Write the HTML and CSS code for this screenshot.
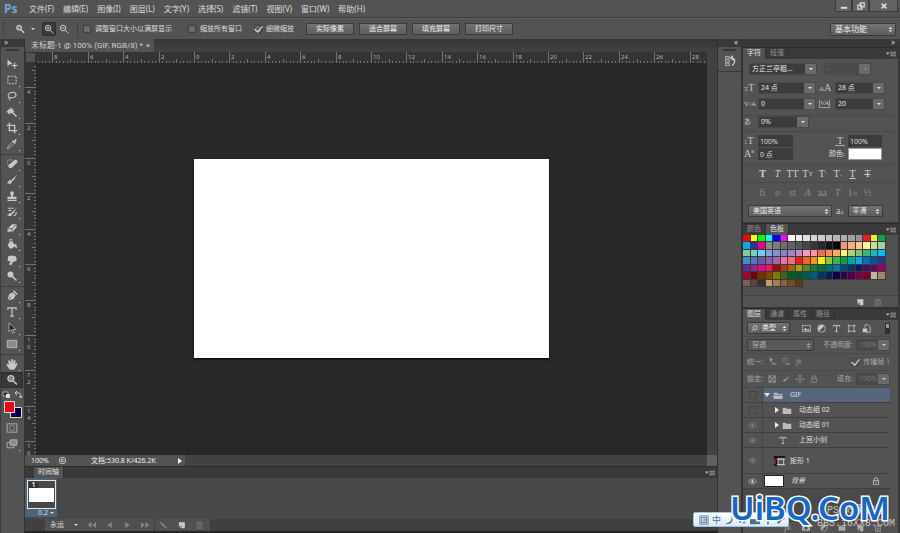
FILE: index.html
```html
<!DOCTYPE html>
<html lang="zh-CN">
<head>
<meta charset="UTF-8">
<title>未标题-1</title>
<link rel="stylesheet" href="styles.css">
</head>
<body>
<!-- icon sprite -->
<svg class="sprite" aria-hidden="true">
	<symbol id="move" viewBox="0 0 16 16"><path d="M2 2v9l2.500-2.500L9 8z" fill="currentColor"/><path d="M11.500 6v8M7.500 10h8" stroke="currentColor" stroke-width="1.500"/></symbol>
	<symbol id="marquee" viewBox="0 0 16 16"><rect x="2.500" y="3" width="11" height="10" fill="none" stroke="currentColor" stroke-width="1.300" stroke-dasharray="2.500 1.500"/></symbol>
	<symbol id="lasso" viewBox="0 0 16 16"><path d="M4 10C1 7 4 3 9 3s6 6 1 7c-3 1-6-1-6 1s2 1 1 3" fill="none" stroke="currentColor" stroke-width="1.400"/></symbol>
	<symbol id="wand" viewBox="0 0 16 16"><path d="M6 1l1 3 3-1-1 3 3 1-3 1 0 2-3-1-2 3-1-3-3-1 3-2-1-2 3 1z" fill="currentColor"/><path d="M8 8l6 6" stroke="currentColor" stroke-width="1.800"/></symbol>
	<symbol id="crop" viewBox="0 0 16 16"><path d="M4.500 1v10.500H15M1 4.500h10.500V15" fill="none" stroke="currentColor" stroke-width="1.800"/></symbol>
	<symbol id="dropper" viewBox="0 0 16 16"><path d="M2 14l1-3 6-6 2 2-6 6z" fill="none" stroke="currentColor"/><path d="M8 4l4 4 1-1-1-1 2-2c1-1-1-3-2-2l-2 2-1-1z" fill="currentColor"/></symbol>
	<symbol id="heal" viewBox="0 0 16 16"><path d="M4 9l7-6c3-2 5 1 4 3l-7 7c-3 2-6-1-4-4z" fill="currentColor"/><path d="M8 3C3 1 1 4 2 7s2 4 3 6" fill="none" stroke="currentColor" stroke-dasharray="2 1"/></symbol>
	<symbol id="brush" viewBox="0 0 16 16"><path d="M15 1L7 8l2 2z" fill="currentColor"/><path d="M6 8c-3 0-2 3-5 4 3 2 7 1 7-2z" fill="currentColor"/></symbol>
	<symbol id="stamp" viewBox="0 0 16 16"><path d="M5.500 4a2.500 2.500 0 1 1 5 0L9 9h5v3H2V9h5zM2 13h12v1.500H2z" fill="currentColor"/></symbol>
	<symbol id="history" viewBox="0 0 16 16"><path d="M14 3L7 9l2 2zM6 9c-2 0-2 3-5 3 3 2 7 2 7-1z" fill="currentColor"/><path d="M3 3h7M3 6h4M10 13c4 0 4-4 3-5" fill="none" stroke="currentColor" stroke-width="1.500"/></symbol>
	<symbol id="eraser" viewBox="0 0 16 16"><path d="M8 3h6v4l-5 6H2V9z" fill="currentColor"/><path d="M2 9h6l6-6M8 9v4" fill="none" stroke="#444"/></symbol>
	<symbol id="bucket" viewBox="0 0 16 16"><path d="M2 9l5-5 6 6-5 4H5z" fill="currentColor"/><path d="M5 8V2h3v5" fill="none" stroke="currentColor"/><path d="M12 8c3 1 3 3 2 6-2-1-2-3-2-6z" fill="currentColor"/></symbol>
	<symbol id="smudge" viewBox="0 0 16 16"><path d="M3 3c4-2 10-1 11 2v4l-5 2-2 4-3-1 2-4-4-1z" fill="currentColor"/></symbol>
	<symbol id="dodge" viewBox="0 0 16 16"><circle cx="6" cy="6" r="4" fill="currentColor"/><path d="M8.500 8.500L14 14" stroke="currentColor" stroke-width="2"/></symbol>
	<symbol id="pen" viewBox="0 0 16 16"><path d="M2 14l2-8 5-3 4 4-3 5z" fill="currentColor"/><path d="M10 1l5 5" stroke="currentColor" stroke-width="2"/><path d="M2 14l5-5" stroke="#444"/></symbol>
	<symbol id="type" viewBox="0 0 16 16"><path d="M2.500 5V2.500h11V5M8 2.500v11M5.500 13.500h5" fill="none" stroke="currentColor" stroke-width="1.600"/></symbol>
	<symbol id="select" viewBox="0 0 16 16"><path d="M4 1v12l3-3 2 5 2-1-2-4h4z" fill="#222" stroke="currentColor"/></symbol>
	<symbol id="rect" viewBox="0 0 16 16"><rect x="1.500" y="3" width="13" height="10" fill="#8a8a8a" stroke="currentColor"/></symbol>
	<symbol id="hand" viewBox="0 0 16 16"><path d="M5 15L1 9l1-1 3 2-2-6 1.500-.5L7 8V2h1.500l.5 6 2-5 1.300.5L11 9l3-2 1 1-4 7z" fill="currentColor" stroke="currentColor"/></symbol>
	<symbol id="zoom" viewBox="0 0 16 16"><circle cx="6.500" cy="6" r="4" fill="#888" stroke="currentColor" stroke-width="1.500"/><path d="M9.500 9l5 5" stroke="currentColor" stroke-width="2.200"/></symbol>
	<symbol id="zoomin" viewBox="0 0 16 16"><circle cx="6.500" cy="6.500" r="4.500" fill="none" stroke="currentColor" stroke-width="1.300"/><path d="M10 10l5 5M4 6.500h5M6.500 4v5" stroke="currentColor" stroke-width="1.400"/></symbol>
	<symbol id="zoomout" viewBox="0 0 16 16"><circle cx="6.500" cy="6.500" r="4.500" fill="none" stroke="currentColor" stroke-width="1.300"/><path d="M10 10l5 5M4 6.500h5" stroke="currentColor" stroke-width="1.400"/></symbol>
	<symbol id="mask" viewBox="0 0 16 16"><rect x="1.500" y="2.500" width="13" height="11" fill="none" stroke="currentColor"/><circle cx="8" cy="8" r="3.500" fill="none" stroke="currentColor" stroke-dasharray="2 1"/></symbol>
	<symbol id="screen" viewBox="0 0 16 16"><path d="M5.500 2.500h9v7h-9z" fill="#888" stroke="currentColor"/><path d="M5.500 6h-4v7h9V9.500" fill="none" stroke="currentColor"/></symbol>
	<symbol id="updown" viewBox="0 0 8 10"><path d="M1 4l3-3 3 3zM1 6l3 3 3-3z" fill="currentColor"/></symbol>
	<symbol id="menu" viewBox="0 0 14 8"><path d="M0 2h5L2.500 5z" fill="currentColor"/><path d="M6 1.500h8M6 4h8M6 6.500h8" stroke="currentColor"/></symbol>
	<symbol id="new" viewBox="0 0 12 12"><path d="M2 2h9v9H6V7H2z" fill="currentColor"/><path d="M2 8l3 3V8z" fill="currentColor"/></symbol>
	<symbol id="trash" viewBox="0 0 12 12"><path d="M1 3.500h10M4 3V1.500h4V3M2.500 4v7h7V4M5 5.500v4M7 5.500v4" fill="none" stroke="currentColor"/></symbol>
	<symbol id="image" viewBox="0 0 14 12"><rect x="1" y="1" width="12" height="10" fill="none" stroke="currentColor"/><path d="M2 9l3-4 3 3 2-2 2 3z" fill="currentColor"/></symbol>
	<symbol id="maskadd" viewBox="0 0 14 12"><path fill-rule="evenodd" d="M0 1h14v10H0zM7 3a3 3 0 1 0 .1 0z" fill="currentColor"/></symbol>
	<symbol id="adjust" viewBox="0 0 12 12"><circle cx="6" cy="6" r="5" fill="none" stroke="currentColor"/><path d="M2.500 9.500a5 5 0 0 1 7-7z" fill="currentColor"/></symbol>
	<symbol id="shape" viewBox="0 0 12 12"><path d="M2.500 2.500h7v7h-7z" fill="none" stroke="currentColor"/><path d="M1 1h2v2H1zM9 1h2v2H9zM1 9h2v2H1zM9 9h2v2H9z" fill="currentColor"/></symbol>
	<symbol id="smart" viewBox="0 0 12 12"><path d="M4 5V1h4l3 3v7H6" fill="none" stroke="currentColor"/><path d="M1 6h6v5H1z" fill="currentColor"/></symbol>
	<symbol id="lock" viewBox="0 0 12 12"><path d="M3.500 6V3.500a2.500 2.500 0 0 1 5 0V6M2 5.500h8v6H2zM6 7.500v2" fill="none" stroke="currentColor"/></symbol>
	<symbol id="folder" viewBox="0 0 14 12"><path d="M1 2h4l1 1.500h7V11H1z" fill="currentColor"/></symbol>
	<symbol id="openfolder" viewBox="0 0 14 12"><path d="M2 2h4l1 1.500h6V5H1V3z" fill="currentColor"/><path d="M0 6h14l-1 5H1z" fill="currentColor"/></symbol>
	<symbol id="eye" viewBox="0 0 14 10"><path d="M1 5c3-5 9-5 12 0-3 5-9 5-12 0z" fill="none" stroke="currentColor"/><circle cx="7" cy="5" r="2" fill="currentColor"/></symbol>
	<symbol id="checker" viewBox="0 0 12 12"><path d="M1 1h10v10H1z" fill="none" stroke="currentColor"/><path d="M2 2h3v3H2zM8 2h3v3H8zM5 5h3v3H5zM2 8h3v3H2zM8 8h3v3H8z" fill="currentColor"/></symbol>
	<symbol id="cross" viewBox="0 0 12 12"><path d="M6 0v12M0 6h12M4 2l2-2 2 2M4 10l2 2 2-2M2 4L0 6l2 2M10 4l2 2-2 2" fill="none" stroke="currentColor"/></symbol>
	<symbol id="unipos" viewBox="0 0 14 14"><path d="M3 1v8l2-2 3 3 1-1-3-3 3-1z" fill="currentColor"/><path d="M7 11h3v2H7zM11 11h3v2h-3z" fill="none" stroke="currentColor"/></symbol>
	<symbol id="univis" viewBox="0 0 14 14"><path d="M1 5c2-5 7-5 9 0-2 4-7 4-9 0zM5 4h2" fill="none" stroke="currentColor"/><path d="M7 11h3v2H7zM11 11h3v2h-3z" fill="none" stroke="currentColor"/></symbol>
	<symbol id="hist" viewBox="0 0 16 16"><path d="M2 2h5v3H2zM2 6.500h5v3H2zM2 11h5v3H2z" fill="none" stroke="currentColor"/><path d="M11 14c5-4 4-9-1-10M12 1L9 4l4 3" fill="none" stroke="currentColor" stroke-width="1.800"/></symbol>
</svg>

<header class="menubar">
	<span class="logo">Ps</span>
	<nav class="menus">
		<a href="#">文件(F)</a><a href="#">编辑(E)</a><a href="#">图像(I)</a><a href="#">图层(L)</a><a href="#">文字(Y)</a><a href="#">选择(S)</a><a href="#">滤镜(T)</a><a href="#">视图(V)</a><a href="#">窗口(W)</a><a href="#">帮助(H)</a>
	</nav>
	<div class="winbtns">
		<button aria-label="最小化"><svg viewBox="0 0 10 10"><path d="M1 6h8v2.500H1z" fill="currentColor"/></svg></button>
		<button aria-label="还原"><svg viewBox="0 0 10 10"><path d="M4 1h5v5H4zM1 4h5v5H1z" fill="#555" stroke="currentColor" stroke-width="1.500"/></svg></button>
		<button class="close" aria-label="关闭"><svg viewBox="0 0 10 10"><path d="M2 2l6 6M8 2L2 8" stroke="currentColor" stroke-width="2"/></svg></button>
	</div>
</header>

<div class="options">
	<span class="grip"></span>
	<button class="tool-now" aria-label="缩放工具"><svg class="ic"><use href="#zoom"/></svg><i class="down"></i></button>
	<button class="zbtn on" aria-label="放大"><svg class="ic"><use href="#zoomin"/></svg></button>
	<button class="zbtn" aria-label="缩小"><svg class="ic"><use href="#zoomout"/></svg></button>
	<span class="vsep"></span>
	<label class="opt wide"><input type="checkbox">调整窗口大小以满屏显示</label>
	<label class="opt"><input type="checkbox">缩放所有窗口</label>
	<label class="opt"><input type="checkbox" checked>细微缩放</label>
	<div class="btns">
		<button class="btn">实际像素</button>
		<button class="btn">适合屏幕</button>
		<button class="btn">填充屏幕</button>
		<button class="btn">打印尺寸</button>
	</div>
	<div class="pick work"><select aria-label="工作区"><option>基本功能</option></select><svg><use href="#updown"/></svg></div>
</div>

<div class="workspace">
	<aside class="tools">
		<div class="strip left">»</div>
		<div class="toolgrip"></div>
		<div class="group">
			<button aria-label="移动"><svg><use href="#move"/></svg></button>
			<button class="more" aria-label="选框"><svg><use href="#marquee"/></svg></button>
			<button class="more" aria-label="套索"><svg><use href="#lasso"/></svg></button>
			<button class="more" aria-label="魔棒"><svg><use href="#wand"/></svg></button>
			<button class="more" aria-label="裁剪"><svg><use href="#crop"/></svg></button>
			<button class="more" aria-label="吸管"><svg><use href="#dropper"/></svg></button>
		</div>
		<div class="group">
			<button class="more" aria-label="修复画笔"><svg><use href="#heal"/></svg></button>
			<button class="more" aria-label="画笔"><svg><use href="#brush"/></svg></button>
			<button class="more" aria-label="图章"><svg><use href="#stamp"/></svg></button>
			<button class="more" aria-label="历史画笔"><svg><use href="#history"/></svg></button>
			<button class="more" aria-label="橡皮擦"><svg><use href="#eraser"/></svg></button>
			<button class="more" aria-label="油漆桶"><svg><use href="#bucket"/></svg></button>
			<button class="more" aria-label="涂抹"><svg><use href="#smudge"/></svg></button>
			<button class="more" aria-label="减淡"><svg><use href="#dodge"/></svg></button>
		</div>
		<div class="group">
			<button class="more" aria-label="钢笔"><svg><use href="#pen"/></svg></button>
			<button class="more" aria-label="文字"><svg><use href="#type"/></svg></button>
			<button class="more" aria-label="路径选择"><svg><use href="#select"/></svg></button>
			<button class="more" aria-label="矩形"><svg><use href="#rect"/></svg></button>
		</div>
		<div class="group last">
			<button class="more" aria-label="抓手"><svg><use href="#hand"/></svg></button>
			<button class="on" aria-label="缩放"><svg><use href="#zoom"/></svg></button>
		</div>
		<svg class="colors" viewBox="0 0 24 32">
			<path d="M2 4h5v4H2z" fill="#222" stroke="#aaa"/><path d="M5 6h4v4H5z" fill="#ddd"/>
			<path d="M15 5c4-1 5 1 5 4M16 3l-2 2 2 2M18 8l2 2 1-2" fill="none" stroke="#ccc"/>
			<path d="M9.500 19.500h11v10h-11z" fill="#000048" stroke="#ddd"/>
			<path d="M3.500 13.500h10v11h-10z" fill="#f00012" stroke="#ddd"/>
		</svg>
		<div class="group modes">
			<button aria-label="快速蒙版"><svg><use href="#mask"/></svg></button>
			<button class="more" aria-label="屏幕模式"><svg><use href="#screen"/></svg></button>
		</div>
	</aside>

	<main class="doc">
		<div class="doctabs"><div class="doctab"><span>未标题-1 @ 100% (GIF, RGB/8) *</span><button aria-label="关闭文档">×</button></div></div>
		<div class="view">
			<div class="corner"></div>
			<svg class="ruler-x" id="rulerX"></svg>
			<div class="scroll"></div>
			<svg class="ruler-y" id="rulerY"></svg>
			<div class="stage"><div class="paper"></div></div>
			<div class="scroll"></div>
		</div>
		<div class="status">
			<span class="pct">100%</span>
			<svg viewBox="0 0 10 10"><circle cx="5" cy="5" r="4" fill="#bbb"/><path d="M3 3h4v4H3zM5 5h2" fill="none" stroke="#555"/></svg>
			<span class="size">文档:530.8 K/426.2K</span>
			<button aria-label="更多"><i class="right"></i></button>
			<span class="bar"></span>
			<span class="end"></span>
		</div>
		<section class="timeline">
			<div class="tabs"><span class="tab on">时间轴</span><svg class="pmenu"><use href="#menu"/></svg></div>
			<div class="frames">
				<div class="frame">
					<div class="thumb"><b>1</b><span></span></div>
					<span class="delay">0.2<i class="down"></i></span>
				</div>
			</div>
			<div class="playbar">
				<div class="play">
					<div class="loop"><select aria-label="循环"><option>永远</option></select><i class="down"></i></div>
					<button aria-label="第一帧"><svg viewBox="0 0 12 10"><path d="M6 1v8L1 5zM12 1v8L7 5z" fill="currentColor"/></svg></button>
					<button aria-label="上一帧"><svg viewBox="0 0 12 10"><path d="M9 1v8L3 5z" fill="currentColor"/></svg></button>
					<button aria-label="播放"><svg viewBox="0 0 12 10"><path d="M3 1v8l6-4z" fill="currentColor"/></svg></button>
					<button aria-label="下一帧"><svg viewBox="0 0 12 10"><path d="M0 1v8l5-4zM6 1v8l5-4z" fill="currentColor"/></svg></button>
					<button class="cut" aria-label="过渡"><svg viewBox="0 0 12 10"><path d="M2 1l9 8-3-1-4-3z" fill="currentColor" stroke="currentColor"/></svg></button>
					<button class="lit" aria-label="复制帧"><svg><use href="#new"/></svg></button>
					<button aria-label="删除帧"><svg><use href="#trash"/></svg></button>
				</div>
			</div>
		</section>
	</main>

	<aside class="dock">
		<div class="strip">«</div>
		<button aria-label="历史记录"><svg><use href="#hist"/></svg></button>
	</aside>

	<aside class="panels">
		<div class="strip">»</div>
		<section class="panel">
			<div class="tabs"><span class="tab on">字符</span><span class="tab">段落</span><svg class="pmenu"><use href="#menu"/></svg></div>
			<div class="char">
				<div class="row fonts">
					<div class="combo family"><input aria-label="字体" value="方正兰亭粗..."><button aria-label="选择字体"><i class="down"></i></button></div>
					<div class="combo style off"><input aria-label="字形" value="-" disabled><button aria-label="选择字形" disabled><i class="down"></i></button></div>
				</div>
				<div class="pairs">
					<label for="fs"><small>T</small>T</label><div class="combo"><input id="fs" value="24 点"><button aria-label="字号"><i class="down"></i></button></div>
					<label for="lh"><small>A</small>A</label><div class="combo"><input id="lh" value="28 点"><button aria-label="行距"><i class="down"></i></button></div>
					<label class="kern" for="kn">V/A</label><div class="combo"><input id="kn" value="0"><button aria-label="字偶距"><i class="down"></i></button></div>
					<label class="boxed" for="tr">VA</label><div class="combo"><input id="tr" value="20"><button aria-label="字距"><i class="down"></i></button></div>
				</div>
				<div class="row tsume"><label for="ts">あ</label><div class="combo"><input id="ts" value="0%"><button aria-label="比例间距"><i class="down"></i></button></div></div>
				<div class="scales">
					<label for="vs"><small>↕</small>T</label><input id="vs" value="100%"><label class="r wide" for="hs">T</label><input id="hs" value="100%">
					<label for="bl">Aª</label><input id="bl" value="0 点"><label class="r word" for="col">颜色:</label><input id="col" type="color" value="#ffffff">
				</div>
				<div class="faces">
					<button><b>T</b></button><button><i>T</i></button><button>TT</button><button>T<small>T</small></button><button>T<sup>'</sup></button><button>T<sub>,</sub></button><button><u>T</u></button><button><s>T</s></button>
				</div>
				<div class="faces dim">
					<button>fi</button><button><i>o</i></button><button>st</button><button><i>A</i></button><button>aa</button><button><i>T</i></button><button>1<sup>st</sup></button><button>½</button>
				</div>
				<div class="row lang">
					<div class="pick language"><select aria-label="语言"><option>美国英语</option></select><svg><use href="#updown"/></svg></div>
					<label for="aa">a<small>a</small></label>
					<div class="pick alias"><select id="aa"><option>平滑</option></select><svg><use href="#updown"/></svg></div>
				</div>
			</div>
		</section>

		<section class="panel">
			<div class="tabs"><span class="tab">颜色</span><span class="tab on">色板</span><svg class="pmenu"><use href="#menu"/></svg></div>
			<div class="swatchbox"><div class="swatches" id="swatches"></div></div>
			<div class="foot"><svg><use href="#new"/></svg><svg class="dim"><use href="#trash"/></svg></div>
		</section>

		<section class="panel layers">
			<div class="tabs"><span class="tab on">图层</span><span class="tab">通道</span><span class="tab">属性</span><span class="tab">路径</span><svg class="pmenu"><use href="#menu"/></svg></div>
			<div class="lrow filter">
				<div class="pick kind"><svg class="glass" viewBox="0 0 10 10"><circle cx="6" cy="4" r="3" fill="none" stroke="currentColor"/><path d="M4 6L1 9" stroke="currentColor"/></svg><select aria-label="筛选"><option>类型</option></select><svg><use href="#updown"/></svg></div>
				<span class="kinds"><svg><use href="#image"/></svg><svg><use href="#adjust"/></svg><svg><use href="#type"/></svg><svg><use href="#shape"/></svg><svg><use href="#smart"/></svg></span>
				<span class="switch"></span>
			</div>
			<div class="lrow dimrow">
				<div class="pick blend"><select aria-label="混合模式"><option>穿透</option></select><svg><use href="#updown"/></svg></div>
				<label class="push" for="op">不透明度:</label><div class="combo"><input id="op" value="100%" disabled><button aria-label="不透明度"><i class="down"></i></button></div>
			</div>
			<div class="lrow dimrow">
				<span>统一:</span>
				<span class="locks"><svg><use href="#unipos"/></svg><svg><use href="#univis"/></svg><em>fx</em></span>
				<label class="opt push"><input type="checkbox" checked>传播帧 1</label>
			</div>
			<div class="lrow dimrow">
				<span>锁定:</span>
				<span class="locks"><svg><use href="#checker"/></svg><svg><use href="#brush"/></svg><svg><use href="#cross"/></svg><svg><use href="#lock"/></svg></span>
				<label class="push" for="fl">填充:</label><div class="combo"><input id="fl" value="100%" disabled><button aria-label="填充"><i class="down"></i></button></div>
			</div>
			<ul class="list">
				<li class="sel"><span class="vis"><i class="box"></i></span><i class="down big"></i><svg class="fold"><use href="#openfolder"/></svg><span class="name">GIF</span></li>
				<li class="sub"><span class="vis"><i class="box"></i></span><i class="right"></i><svg class="fold"><use href="#folder"/></svg><span class="name">动态组 02</span></li>
				<li class="sub"><span class="vis"><svg><use href="#eye"/></svg></span><i class="right"></i><svg class="fold"><use href="#folder"/></svg><span class="name">动态组 01</span></li>
				<li class="sub text"><span class="vis"><svg><use href="#eye"/></svg></span><svg class="fold"><use href="#type"/></svg><span class="name">上宫小剑</span></li>
				<li class="tall"><span class="vis"><svg><use href="#eye"/></svg></span><svg class="vec" viewBox="0 0 12 12"><path d="M0 1h12v2H4v9H0z" fill="#1c1010"/><path d="M0 4h2v6H0z" fill="#72302a"/><path d="M4.500 4.500h6v6h-6zM3 4.500h9M3 10.500h9" fill="none" stroke="#ccc"/></svg><span class="name">矩形 1</span></li>
				<li class="back"><span class="vis lit"><svg><use href="#eye"/></svg></span><span class="white"></span><span class="name"><i>背景</i></span><svg class="lk"><use href="#lock"/></svg></li>
			</ul>
			<div class="foot lfoot"><em>fx.</em><svg><use href="#maskadd"/></svg><svg><use href="#adjust"/></svg><svg><use href="#folder"/></svg><svg><use href="#new"/></svg><svg><use href="#trash"/></svg></div>
		</section>
	</aside>
</div>

<div class="ime">
	<svg viewBox="0 0 12 12"><path d="M1 1h10v10H1zM3 3h6v6H3zM5 5h4M5 7h3" fill="none" stroke="#456b96"/></svg>
	<span>中</span>
	<svg viewBox="0 0 12 12"><path d="M9 1c1 6-2 9-8 9 6 3 12-3 8-9z" fill="#456b96"/></svg>
	<svg viewBox="0 0 12 12"><path d="M3 9l2-2M8 8l1 2" stroke="#456b96" stroke-width="2"/></svg>
	<svg viewBox="0 0 12 12"><path d="M0 5h12v6H0z" fill="#456b96"/></svg>
	<svg viewBox="0 0 12 12"><path d="M6 3v8M3 6h6" stroke="#456b96" stroke-width="2"/></svg>
	<svg viewBox="0 0 12 12"><path d="M2 10l6-6M7 2l3 3" stroke="#456b96" stroke-width="2"/></svg>
</div>
<div class="credit"><span>PS 效果教程</span><span>BBS.16XX8.COM</span></div>
<div class="brand">UiBQ.CoM</div>

<script src="script.js"></script>
</body>
</html>
```

FILE: styles.css
```css
* {
	box-sizing: border-box;
}
body {
	margin: 0;
	height: 100vh;
	overflow: hidden;
	display: flex;
	flex-direction: column;
	background: #535353;
	color: #dcdcdc;
	font: 7px/10px "Noto Sans", "Noto Sans CJK SC", sans-serif;
}
button, input, select {
	font: inherit;
	color: inherit;
	margin: 0;
	padding: 0;
	border: 0;
	border-radius: 0;
	background: none;
	appearance: none;
	min-width: 0;
	outline: none;
}
button {
	display: flex;
	align-items: center;
	justify-content: center;
}
svg {
	display: block;
	flex: none;
}
.sprite {
	position: absolute;
	width: 0;
	height: 0;
}
.down {
	flex: none;
	border: 2px solid transparent;
	border-top-color: currentColor;
	border-bottom: 0;
}
.down.big {
	border-width: 4px 3px 0;
}
.right {
	flex: none;
	border-style: solid;
	border-width: 3px 0 3px 4px;
	border-color: transparent transparent transparent #eee;
}

/* menu bar */
.menubar {
	flex: none;
	height: 18px;
	display: flex;
	align-items: center;
	border-bottom: 1px solid #3c3c3c;
	font-size: 8px;
}
.logo {
	width: 29px;
	padding-left: 4px;
	color: #6ea6dc;
	font: bold 12px/16px "Open Sans", sans-serif;
}
.menus {
	display: flex;
	flex: 1;
	gap: 9px;
}
.menus a {
	color: inherit;
	text-decoration: none;
	white-space: nowrap;
}
.winbtns {
	display: flex;
	align-self: flex-start;
	margin-right: 2px;
}
.winbtns button {
	width: 17px;
	height: 12px;
	background: #626262;
	border: 1px solid #3d3d3d;
	border-top: 0;
}
.winbtns .close {
	width: 29px;
}
.winbtns svg {
	width: 8px;
	height: 8px;
}

/* options bar */
.options {
	flex: none;
	height: 21px;
	display: flex;
	align-items: center;
	border-top: 1px solid #606060;
	padding-right: 4px;
}
.grip {
	width: 3px;
	height: 14px;
	margin: 0 8px 0 3px;
	border-left: 1px dotted #333;
}
.ic {
	width: 10px;
	height: 10px;
}
.tool-now {
	gap: 6px;
	width: 24px;
	height: 14px;
	margin-right: 4px;
	padding-right: 3px;
}
.zbtn {
	width: 14px;
	height: 14px;
	margin-right: 1px;
}
.zbtn.on {
	background: #3a3a3a;
	border: 1px solid #303030;
	border-radius: 2px;
}
.vsep {
	width: 1px;
	height: 15px;
	margin: 0 5px;
	background: #3f3f3f;
}
.opt {
	display: flex;
	align-items: center;
	gap: 4px;
	margin-right: 12px;
	white-space: nowrap;
}
.opt.wide {
	margin-right: 16px;
}
.opt input {
	position: relative;
	width: 8px;
	height: 8px;
	border: 1px solid #3e3e3e;
	border-radius: 1px;
	background: #6a6a6a;
}
.opt input:checked::after {
	content: "";
	position: absolute;
	left: 1px;
	top: -2px;
	width: 4px;
	height: 7px;
	border: solid #e6e6e6;
	border-width: 0 1px 1px 0;
	transform: rotate(40deg);
}
.btns {
	display: flex;
	flex: 1;
	gap: 5px;
}
.btn {
	width: 48px;
	height: 12px;
	border: 1px solid #3b3b3b;
	background: linear-gradient(#727272, #5e5e5e);
	color: #eee;
}
.pick {
	position: relative;
	display: flex;
	align-items: center;
	height: 12px;
	border: 1px solid #3a3a3a;
	border-radius: 1px;
	background: linear-gradient(#727272, #5e5e5e);
	color: #eee;
}
.pick select {
	flex: 1;
	height: 10px;
	padding-left: 4px;
}
.pick > svg:last-child {
	position: absolute;
	right: 2px;
	width: 5px;
	height: 7px;
	pointer-events: none;
}
.work {
	width: 66px;
	height: 13px;
	font-size: 8px;
}

/* workspace */
.workspace {
	flex: 1;
	min-height: 0;
	display: grid;
	grid-template-columns: 25px 1fr 26px 157px;
	background: #333;
}
.strip {
	flex: none;
	height: 8px;
	padding: 0 3px;
	background: #383838;
	color: #ccc;
	font-size: 8px;
	line-height: 6px;
	text-align: right;
}
.strip.left {
	text-align: left;
}
.tools {
	display: flex;
	flex-direction: column;
	background: #535353;
	border-right: 1px solid #333;
	border-left: 1px solid #3c3c3c;
}
.toolgrip {
	height: 9px;
	margin: 0 5px;
	background: radial-gradient(#383838, #383838) center 2px / 13px 2px no-repeat;
}
.group {
	padding-bottom: 2px;
	border-bottom: 1px solid #3f3f3f;
	margin-bottom: 1px;
}
.group.last {
	padding: 0;
	border: 0;
	margin: 0;
}
.group button {
	position: relative;
	width: 22px;
	height: 16px;
	color: #c8c8c8;
}
.group svg {
	width: 12px;
	height: 12px;
}
.group .more::after {
	content: "";
	position: absolute;
	right: 3px;
	bottom: 1px;
	width: 1px;
	height: 1px;
	background: #ddd;
}
.group .on {
	background: #383838;
	outline: 1px solid #2c2c2c;
	outline-offset: -1px;
}
.colors {
	width: 24px;
	height: 32px;
}
.modes {
	border: 0;
}

/* document window */
.doc {
	display: flex;
	flex-direction: column;
	min-width: 0;
	background: #333;
}
.doctabs {
	flex: none;
	height: 13px;
	background: linear-gradient(#363636, #424242);
}
.doctab {
	display: flex;
	align-items: center;
	justify-content: space-between;
	width: 129px;
	height: 13px;
	padding: 0 4px 0 6px;
	background: #535353;
	font: 8px/10px Roboto, "Noto Sans CJK SC", sans-serif;
	color: #d0d0d0;
	white-space: nowrap;
}
.view {
	flex: 1;
	min-height: 0;
	display: grid;
	grid-template: 11px 1fr / 11px 1fr 10px;
}
.corner {
	background: #535353;
	border: 1px solid #333;
}
.ruler-x, .ruler-y {
	width: 100%;
	height: 100%;
	overflow: hidden;
	background: #343434;
	fill: #b0b0b0;
	stroke: none;
	font-size: 6px;
}
.scroll {
	background: #424242;
}
.stage {
	position: relative;
	min-height: 0;
	background: #282828;
}
/* artboard sits freely on the pasteboard */
.paper {
	position: absolute;
	left: 158px;
	top: 96px;
	width: 355px;
	height: 199px;
	background: #fff;
	box-shadow: 0 1px 2px #000;
}
.status {
	flex: none;
	display: flex;
	align-items: center;
	height: 11px;
	padding-left: 6px;
	background: #535353;
	color: #eee;
}
.status svg {
	width: 9px;
	height: 9px;
	margin-right: 24px;
}
.pct {
	width: 27px;
}
.size {
	width: 84px;
	white-space: nowrap;
}
.status button {
	width: 10px;
	height: 10px;
}
.bar {
	flex: 1;
	height: 11px;
	background: #424242;
}
.end {
	width: 10px;
	height: 11px;
	background: #606060;
}
.tabs {
	flex: none;
	display: flex;
	align-items: center;
	height: 12px;
	background: #3a3a3a;
	border-top: 1px solid #2c2c2c;
}
.tab {
	height: 11px;
	padding: 0 4px;
	color: #929292;
	border-right: 1px solid #303030;
}
.tab.on {
	background: #535353;
	color: #e2e2e2;
}
.pmenu {
	width: 10px;
	height: 6px;
	margin-left: auto;
	margin-right: 2px;
	color: #bbb;
}
.timeline .tabs {
	padding-left: 9px;
}
.frames {
	height: 41px;
	background: #484848;
}
.frame {
	width: 32px;
	height: 39px;
	padding: 2px 1px 0 2px;
	background: #4e6279;
}
.thumb {
	display: flex;
	flex-direction: column;
	height: 29px;
	padding: 1px;
	border: 1px solid #e8e8e8;
	background: #484848;
}
.thumb b {
	width: 9px;
	height: 6px;
	line-height: 6px;
	text-align: center;
	background: #333;
}
.thumb span {
	height: 14px;
	background: #fff;
}
.delay {
	display: flex;
	align-items: center;
	justify-content: flex-end;
	gap: 2px;
	padding-right: 2px;
	line-height: 8px;
}
.playbar {
	height: 14px;
	border-bottom: 2px solid #242424;
	background: #404040;
}
.play {
	display: flex;
	align-items: center;
	width: 165px;
	height: 12px;
	margin-left: 20px;
	background: #505050;
	color: #858585;
}
.loop {
	display: flex;
	align-items: center;
	width: 37px;
	padding: 0 4px 0 5px;
	color: #ddd;
}
.loop select {
	flex: 1;
	height: 10px;
}
.play button {
	width: 18px;
	height: 12px;
}
.play svg {
	width: 9px;
	height: 8px;
}
.play .cut {
	border-left: 1px solid #404040;
}
.play .lit {
	color: #ccc;
}

/* collapsed dock */
.dock {
	background: #535353;
	border-left: 1px solid #303030;
	border-right: 2px solid #333;
}
.dock button {
	width: 100%;
	height: 25px;
	padding-top: 4px;
	border-bottom: 1px solid #383838;
	background: radial-gradient(#383838, #383838) center 2px / 13px 2px no-repeat;
}
.dock svg {
	width: 12px;
	height: 12px;
	color: #ccc;
}

/* panels */
.panels {
	display: flex;
	flex-direction: column;
	min-height: 0;
	padding-right: 2px;
	background: #383838;
}
.panel {
	flex: none;
	background: #535353;
	margin-bottom: 1px;
}
.row {
	display: flex;
	align-items: center;
}
.combo {
	display: flex;
	height: 12px;
	border: 1px solid #484848;
	background: #3c3c3c;
	color: #e4e4e4;
}
.combo input {
	flex: 1;
	width: 0;
	padding-left: 2px;
}
.combo button {
	width: 11px;
	background: #6a6a6a;
}
.combo.off {
	background: #4b4b4b;
	color: #888;
}
.char {
	padding: 4px 3px 5px 1px;
}
.char label {
	color: #c4c4c4;
	font-family: "Liberation Serif", "Noto Sans CJK SC", serif;
	font-size: 10px;
	white-space: nowrap;
}
.char label small, .char label.kern {
	font-size: 7px;
}
.char label.boxed {
	font-size: 7px;
	line-height: 7px;
	border: 1px solid #999;
	border-top: 0;
	justify-self: start;
}
.fonts {
	gap: 7px;
	padding: 0 0 7px 5px;
}
.family {
	width: 68px;
}
.style {
	width: 47px;
}
.pairs {
	display: grid;
	grid-template-columns: 11px 58px 13px 50px;
	column-gap: 3px;
	row-gap: 4px;
	align-items: center;
	padding: 0 0 5px;
	border-bottom: 1px solid #484848;
}
.tsume {
	gap: 5px;
	padding: 0 0 3px;
	border-bottom: 1px solid #484848;
}
.tsume .combo {
	width: 51px;
}
.char .tsume label {
	width: 9px;
	font-size: 7px;
}
.scales {
	display: grid;
	grid-template-columns: 11px 35px 49px 34px;
	gap: 1px 3px;
	align-items: center;
	padding: 3px 0 4px;
	border-bottom: 1px solid #484848;
}
.scales input {
	width: 100%;
	height: 12px;
	padding-left: 2px;
	background: #3c3c3c;
}
.scales input[type=color] {
	padding: 0;
}
.scales input::-webkit-color-swatch-wrapper {
	padding: 0;
}
.scales input::-webkit-color-swatch {
	border: 1px solid #999;
}
.scales .r {
	justify-self: end;
}
.scales .wide {
	padding: 0 2px;
	line-height: 9px;
	border-bottom: 1px solid #aaa;
}
.char .word {
	color: #ddd;
	font-size: 7px;
}
.faces {
	display: flex;
	height: 18px;
	padding-left: 11px;
	border-bottom: 1px solid #484848;
	color: #d0d0d0;
	font: 10px/10px "Liberation Serif", serif;
}
.faces button {
	width: 15px;
	gap: 0;
}
.faces small, .faces sup, .faces sub {
	font-size: 7px;
}
.faces.dim {
	height: 20px;
	border: 0;
	color: #8c8c8c;
}
.lang {
	gap: 4px;
	padding: 2px 0 0 4px;
}
.language {
	width: 84px;
}
.alias {
	width: 35px;
}

/* swatches */
.swatchbox {
	height: 60px;
	background: #505050;
}
.swatches {
	display: grid;
	grid-template-columns: repeat(19, 1fr);
	grid-template-rows: repeat(7, 1fr);
	width: 143px;
	height: 52px;
}
.swatches span {
	border: solid #3a3a3a;
	border-width: 0 1px 1px 0;
}
.foot {
	display: flex;
	align-items: center;
	justify-content: flex-end;
	gap: 10px;
	height: 12px;
	padding-right: 16px;
	border-top: 1px solid #424242;
	color: #ccc;
}
.foot svg {
	width: 8px;
	height: 8px;
}
.dim {
	color: #888;
}

/* layers */
.panel.layers {
	flex: 1;
	display: flex;
	flex-direction: column;
	margin: 0;
}
.lrow {
	display: flex;
	align-items: center;
	gap: 5px;
	flex: none;
	height: 17px;
	margin-right: 8px;
	padding-left: 4px;
	border-bottom: 1px solid #484848;
	white-space: nowrap;
}
.dimrow {
	color: #a8a8a8;
}
.kind {
	width: 43px;
	padding-left: 3px;
}
.kind .glass {
	width: 7px;
	height: 7px;
}
.kinds {
	display: flex;
	flex: 1;
	gap: 6px;
	margin-left: 7px;
	color: #c8c8c8;
}
.kinds svg {
	width: 9px;
	height: 9px;
}
.switch {
	width: 5px;
	height: 11px;
	border: 1px solid #2d2d2d;
	background: linear-gradient(#999 50%, #333 50%);
}
.blend {
	width: 67px;
	background: #5a5a5a;
	color: #aaa;
}
.dimrow .combo {
	width: 34px;
	margin-left: -2px;
	background: #4a4a4a;
	color: #777;
}
.dimrow .combo button {
	color: #ccc;
}
.dimrow .opt {
	margin-right: 0;
}
.dimrow .opt input {
	background: none;
	border-color: #484848;
}
.dimrow .push {
	margin-left: auto;
}
.locks {
	display: flex;
	gap: 6px;
	color: #999;
}
.locks svg {
	width: 8px;
	height: 8px;
}
.list {
	flex: 1;
	list-style: none;
	margin: 0 8px 0 0;
	padding: 0;
	background: #4a4a4a;
}
.list li {
	display: flex;
	align-items: center;
	height: 15px;
	background: #535353;
	border-bottom: 1px solid #404040;
	color: #e0e0e0;
}
.list .sel {
	background: #566579;
}
.vis {
	display: flex;
	align-items: center;
	justify-content: center;
	align-self: stretch;
	width: 20px;
	margin-right: 1px;
	border-right: 1px solid #444;
	background: #535353;
	color: #8d8d8d;
}
.vis svg {
	width: 9px;
	height: 7px;
}
.vis.lit {
	color: #ddd;
}
.box {
	width: 8px;
	height: 8px;
	border: 1px solid #424242;
}
.fold {
	width: 10px;
	height: 9px;
	margin: 0 7px 0 3px;
	color: #bbb;
}
.sub .right {
	margin-left: 11px;
}
.text .fold {
	margin-left: 14px;
	margin-right: 11px;
}
.list .tall {
	height: 26px;
}
.vec {
	width: 11px;
	height: 11px;
	margin: 0 5px 0 10px;
}
.white {
	width: 20px;
	height: 12px;
	margin-right: 7px;
	border: 1px solid #222;
	background: #fff;
}
.lk {
	width: 8px;
	height: 8px;
	margin: 0 10px 0 auto;
}
.lfoot {
	flex: none;
	color: #aaa;
}

/* floating overlays */
.ime {
	position: absolute;
	right: 111px;
	bottom: 6px;
	display: flex;
	align-items: center;
	gap: 3px;
	width: 96px;
	height: 15px;
	padding: 0 5px;
	border: 1px solid #9fc1e6;
	border-radius: 2px;
	background: linear-gradient(#fff, #d8e8f8);
	color: #456b96;
	font-size: 9px;
}
.ime svg {
	width: 10px;
	height: 10px;
}
.credit {
	position: absolute;
	right: 5px;
	bottom: 3px;
	display: flex;
	flex-direction: column;
	color: #c4c4c4;
	font: 10px/13px "Liberation Mono", "Noto Sans CJK SC", monospace;
}
.credit span:first-child {
	padding-left: 10px;
}
.brand {
	position: absolute;
	right: 10px;
	bottom: 9px;
	color: #1468cc;
	font: 600 33px/32px "Noto Sans", "Open Sans", sans-serif;
	-webkit-text-stroke: 3px #fff;
	paint-order: stroke fill;
}
```

FILE: script.js
```js
var SVG = 'http://www.w3.org/2000/svg';
var STEP = 35.4; // two centimetres at 100%

function add(parent, name, attrs, text) {
	var el = document.createElementNS(SVG, name);
	for (var k in attrs) el.setAttribute(k, attrs[k]);
	if (text) el.textContent = text;
	parent.appendChild(el);
}

function drawRuler(id, origin, from, to, vertical) {
	var svg = document.getElementById(id);
	for (var n = from; n <= to; n += 2) {
		var p = Math.round(origin + n / 2 * STEP);
		for (var i = 0; i < 10; i++) {
			var q = Math.round(origin + n / 2 * STEP + i * STEP / 10);
			var len = i == 0 ? 11 : i == 5 ? 4 : 2;
			add(svg, 'rect', vertical
				? {x: 11 - len, y: q, width: len, height: 1, opacity: 0.5}
				: {x: q, y: 11 - len, width: 1, height: len, opacity: 0.5});
		}
		if (p < 0) continue;
		var label = String(Math.abs(n));
		if (vertical) {
			for (var c = 0; c < label.length; c++)
				add(svg, 'text', {x: 2, y: p + 7 + c * 7}, label[c]);
		} else {
			add(svg, 'text', {x: p + 2, y: 7}, label);
		}
	}
}
drawRuler('rulerX', 158, -10, 28, false);
drawRuler('rulerY', 95, -6, 16, true);

var colors = [
	'ff0000 ffff00 00ff00 00ffff 0000ff ff00ff ffffff ebebeb e1e1e1 d7d7d7 cccccc c2c2c2 b7b7b7 acacac a0a0a0 959595 ed1c24 fff200 00a651',
	'00aeef 2e3192 ec008c 898989 7d7d7d 707070 626262 555555 464646 363636 262626 111111 000000 f7977a f9ad81 fdc68a fff79a c4df9b a2d39c',
	'82ca9d 7bcdc8 6ecff6 7ea7d8 8493ca 8882be a187be bc8dbf f49ac2 f6989d f26c4f f68e55 fbaf5c fff467 acd372 7bc473 3bb878 1abbb4 00bff3',
	'438cca 5574b9 605ca8 855fa8 a763a8 f06ea9 f26d7d ed1c24 f26522 f7941d fff200 8dc73f 39b54a 00a651 00a99d 00aeef 0072bc 0054a6 2e3192',
	'662d91 92278f ec008c ed145b 9e0b0f a0410d a36209 aba000 598527 1a7b30 007236 00746b 0076a3 004b80 003471 1b1464 440e62 630460 9e005d',
	'9e0039 790000 7b2e00 7d4900 827b00 406618 005e20 005826 005952 005b7f 003663 002157 0d004c 32004b 4b0049 7b0046 7a0026 c7b299 998675',
	'736357 534741 37302d c69c6d a67c52 8c6239 754c24 603913'
].join(' ').split(' ');
var box = document.getElementById('swatches');
colors.forEach(function(c) {
	var s = document.createElement('span');
	s.style.background = '#' + c;
	box.appendChild(s);
});
```
